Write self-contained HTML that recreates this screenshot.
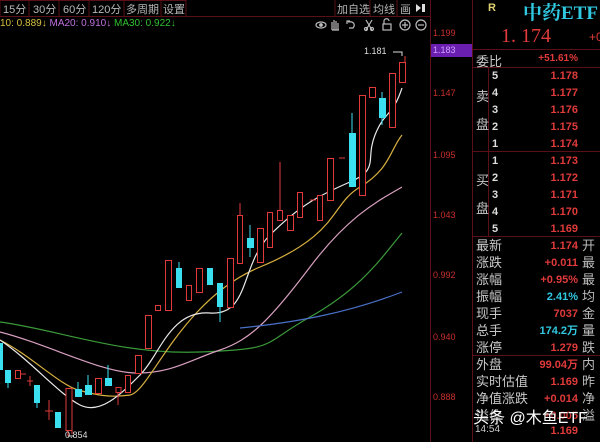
<!DOCTYPE html>
<html><head><meta charset="utf-8"><style>
body{margin:0;background:#000;width:600px;height:442px;overflow:hidden;position:relative;font-family:"Liberation Sans","Noto Sans CJK SC",sans-serif}
.a{position:absolute;white-space:nowrap}
.t{color:#b8b8b8;font-size:11px}
.ax{color:#c8302c;font-size:9px;left:433px}
.lb{color:#c8c8c8;font-size:12px;left:476px}
.nm{color:#e03a3a;font-size:11px;font-weight:bold;right:22px;text-align:right}
.ed{color:#bbb;font-size:12px;left:582px}
</style></head><body>
<svg class="a" style="left:0;top:0" width="600" height="442">
<rect x="0" y="0.5" width="186" height="16" fill="none" stroke="#5a1016"/>
<line x1="29" y1="0" x2="29" y2="17" stroke="#5a1016"/><line x1="59" y1="0" x2="59" y2="17" stroke="#5a1016"/><line x1="89" y1="0" x2="89" y2="17" stroke="#5a1016"/><line x1="124" y1="0" x2="124" y2="17" stroke="#5a1016"/><line x1="161" y1="0" x2="161" y2="17" stroke="#5a1016"/>
<line x1="186" y1="16.5" x2="430" y2="16.5" stroke="#5a1016"/>
<line x1="335" y1="0" x2="335" y2="17" stroke="#5a1016"/><line x1="370" y1="0" x2="370" y2="17" stroke="#5a1016"/><line x1="397" y1="0" x2="397" y2="17" stroke="#5a1016"/>
<line x1="430.5" y1="0" x2="430.5" y2="442" stroke="#5a1016"/>
<line x1="472.5" y1="0" x2="472.5" y2="442" stroke="#5a1016"/>
<line x1="473" y1="49.5" x2="600" y2="49.5" stroke="#5a1016"/>
<line x1="473" y1="67.5" x2="600" y2="67.5" stroke="#5a1016"/>
<line x1="473" y1="151.5" x2="600" y2="151.5" stroke="#5a1016"/>
<line x1="473" y1="236.5" x2="600" y2="236.5" stroke="#5a1016"/>
<line x1="473" y1="355.5" x2="600" y2="355.5" stroke="#5a1016"/>
<line x1="488.5" y1="68" x2="488.5" y2="236" stroke="#5a1016"/>
<rect x="431" y="44" width="41" height="13" fill="#6a1fb0"/>
<g fill="none" stroke-width="1.2">
<path d="M0 322 C60 330 120 355 200 352 S260 345 310 317 S380 260 402 233" stroke="#3a9a3a"/>
<path d="M0 332 C50 345 100 372 135 373 S190 360 220 350 S270 320 310 267 S380 200 402 187" stroke="#d8a0c0"/>
<path d="M240 328 C300 322 350 312 402 292" stroke="#4a70c8"/>
<path d="M0 340 C30 355 60 385 78 390 S110 398 130 395 S180 300 260 267 S330 205 360 187 S390 150 402 135" stroke="#d8b040"/>
<path d="M0 340 C30 360 60 395 80 405 S120 395 140 375 S170 310 210 313 S240 265 270 235 S320 195 350 182 S365 160 375 135 S392 118 402 88" stroke="#e8e8e8"/>
</g>
<g stroke="#e03a3a" fill="#000">
<rect x="15.5" y="370.5" width="5" height="8"/><rect x="66" y="388.5" width="6" height="42"/><rect x="95.5" y="378.5" width="6" height="15"/><rect x="116" y="387.5" width="5" height="5"/><rect x="125.5" y="375.5" width="5" height="17"/><rect x="135.5" y="355.5" width="6" height="18"/><rect x="145.5" y="315.5" width="6" height="33"/><rect x="155.5" y="305.5" width="5" height="5"/><rect x="165.5" y="260.5" width="6" height="50"/><rect x="186.5" y="285.5" width="5" height="15"/><rect x="196.5" y="268.5" width="6" height="24"/><rect x="227.5" y="258.5" width="6" height="49"/><rect x="237.5" y="215.5" width="5" height="48"/><rect x="257.5" y="228.5" width="6" height="34"/><rect x="267.5" y="212.5" width="5" height="35"/><rect x="277.5" y="210.5" width="5" height="10"/><rect x="287.5" y="215.5" width="6" height="15"/><rect x="297.5" y="192.5" width="5" height="25"/><rect x="317.5" y="195.5" width="5" height="25"/><rect x="327.5" y="158.5" width="6" height="42"/><rect x="359.5" y="95.5" width="6" height="100"/><rect x="369.5" y="87.5" width="6" height="10"/><rect x="389.5" y="73.5" width="6" height="54"/><rect x="399.5" y="62.5" width="6" height="20"/>
<path d="M280 162V210M240 203V215M310 200H316M339 158H345M21 374H26M27 381H33M30 376V386M45 411H53M49 400V420M72 431V434M118 392V405M405 56V62M68 430V436" fill="none"/>
</g>
<g fill="#3ae0f0">
<rect x="-2" y="343" width="5" height="27"/><rect x="5" y="370" width="6" height="13"/><rect x="34" y="385" width="6" height="18"/><rect x="55" y="412" width="6" height="16"/><rect x="75" y="389" width="7" height="8"/><rect x="85" y="385" width="7" height="10"/><rect x="105" y="378" width="7" height="8"/><rect x="176" y="268" width="6" height="20"/><rect x="207" y="268" width="6" height="17"/><rect x="217" y="283" width="6" height="24"/><rect x="247" y="238" width="7" height="10"/><rect x="349" y="133" width="7" height="54"/><rect x="379" y="98" width="7" height="20"/>
</g>
<g stroke="#3ae0f0"><path d="M8 383V388M37 403V408M78 382V389M88 375V385M108 365V378M179 262V268M220 307V322M250 225V238M250 248V257M352 113V133M382 92V98M382 118V125"/></g>
<path d="M393 52H402V56" stroke="#ddd" fill="none"/>
<path d="M74 436H68" stroke="#ddd"/>
<g fill="none" stroke="#bbb" stroke-width="1.2">
<ellipse cx="321" cy="25" rx="5" ry="3"/><circle cx="321" cy="25" r="1.3" fill="#bbb"/>
<path d="M332 30V22M334 30V20M336 30V21M338 30V23M332 30H339"/>
<path d="M350 21H347V24M348 22C353 21 356 24 353 28H349"/>
<path d="M366 20L372 30M372 20L366 30"/><circle cx="366" cy="29" r="1.5"/><circle cx="372" cy="29" r="1.5"/>
<rect x="383" y="24" width="8" height="6"/><path d="M384 24V21C384 18 389 18 389 21"/>
<circle cx="405" cy="25" r="5"/><path d="M402 25H408M405 22V28"/>
<circle cx="421" cy="25" r="5"/><path d="M418 25H424"/>
</g>
<path d="M416 4L421 8L416 12Z M422 4H425V12H422Z" fill="#ddd"/>
</svg>
<div class="a t" style="left:3px;top:1px">15分</div>
<div class="a t" style="left:33px;top:1px">30分</div>
<div class="a t" style="left:63px;top:1px">60分</div>
<div class="a t" style="left:92px;top:1px">120分</div>
<div class="a t" style="left:126px;top:1px">多周期</div>
<div class="a t" style="left:163px;top:1px">设置</div>
<div class="a t" style="left:337px;top:1px">加自选</div>
<div class="a t" style="left:373px;top:1px">均线</div>
<div class="a t" style="left:400px;top:1px">画</div>
<div class="a" style="left:0;top:18px;font-size:10px"><span style="color:#d8c040">10: 0.889↓</span> <span style="color:#c070e0">MA20: 0.910↓</span> <span style="color:#30c030">MA30: 0.922↓</span></div>
<div class="a" style="left:364px;top:46px;font-size:9px;color:#ddd">1.181</div>
<div class="a" style="left:65px;top:430px;font-size:9px;color:#ddd">0.854</div>
<div class="a ax" style="top:28px">1.199</div>
<div class="a ax" style="top:45px;color:#d0a0ff">1.183</div>
<div class="a ax" style="top:88px">1.147</div>
<div class="a ax" style="top:150px">1.095</div>
<div class="a ax" style="top:210px">1.043</div>
<div class="a ax" style="top:270px">0.992</div>
<div class="a ax" style="top:332px">0.940</div>
<div class="a ax" style="top:392px">0.888</div>
<div class="a" style="left:488px;top:2px;color:#e0d070;font-size:11px;font-weight:bold">R</div>
<div class="a" style="left:523px;top:-2px;color:#30c8e0;font-size:19px;font-weight:bold;font-family:'Liberation Serif','Noto Serif CJK SC',serif">中药ETF</div>
<div class="a" style="left:501px;top:25px;color:#e03a3a;font-size:20px;font-family:'Liberation Serif',serif">1. 174</div>
<div class="a" style="left:589px;top:30px;color:#e03a3a;font-size:12px">+0</div>
<div class="a lb" style="top:51px;font-size:13px">委比</div>
<div class="a nm" style="top:53px;right:22px;font-size:10px">+51.61%</div>
<div class="a lb" style="top:86px;font-size:13px">卖</div><div class="a lb" style="top:114px;font-size:13px">盘</div>
<div class="a lb" style="top:170px;font-size:13px">买</div><div class="a lb" style="top:198px;font-size:13px">盘</div>
<div class="a" style="left:492px;top:68px;color:#ddd;font-size:11px;font-weight:bold;line-height:17px">5<br>4<br>3<br>2<br>1<br>1<br>2<br>3<br>4<br>5</div>
<div class="a nm" style="top:68px;line-height:17px;text-align:right">1.178<br>1.177<br>1.176<br>1.175<br>1.174<br>1.173<br>1.172<br>1.171<br>1.170<br>1.169</div>
<div class="a lb" style="top:237px;line-height:17px;font-size:13px">最新<br>涨跌<br>涨幅<br>振幅<br>现手<br>总手<br>涨停<br>外盘<br>实时估值<br>净值涨跌<br>溢价</div>
<div class="a nm" style="top:238px;line-height:17px;text-align:right">1.174<br>+0.011<br>+0.95%<br><span style="color:#30c8e0">2.41%</span><br>7037<br><span style="color:#30c8e0">174.2万</span><br>1.279<br>99.04万<br>1.169<br>+0.014<br>+0.005</div>
<div class="a ed" style="top:237px;line-height:17px;font-size:13px">开<br>最<br>最<br>均<br>金<br>量<br>跌<br>内<br>昨<br>净<br>溢</div>
<div class="a" style="left:475px;top:424px;color:#ccc;font-size:10px">14:54</div>
<div class="a nm" style="top:425px">1.169</div>
<div class="a" style="left:473px;top:404px;color:#fff;font-size:16px;text-shadow:0 0 2px #000">头条 @木鱼ETF</div>
</body></html>
